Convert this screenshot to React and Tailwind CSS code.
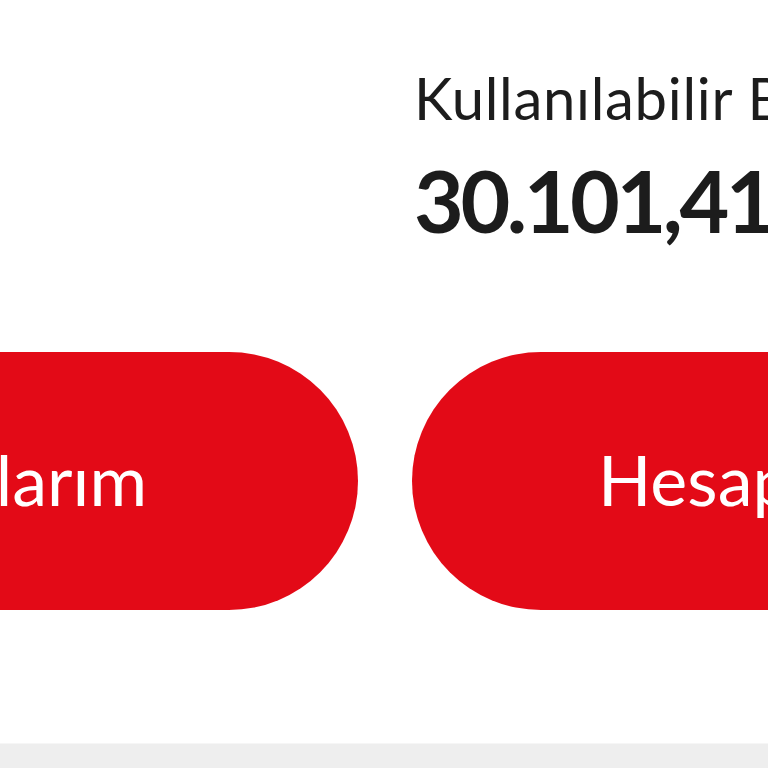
export default function App() {
  return (
    <div className="w-[768px] h-[768px] overflow-hidden bg-white flex flex-col font-['Lato',sans-serif]">
      <div className="flex-1 flex flex-col">
        <div className="ml-[414px] mt-[69px] whitespace-nowrap">
          <p className="text-[58px] leading-none tracking-[0.7px] text-[#1c1c1c] font-normal">Kullanılabilir Bakiye</p>
          <p className="mt-[30px] text-[86px] leading-none tracking-[-3.5px] text-[#1c1c1c] font-bold">30.101,41 TL</p>
        </div>

        <div className="mt-[109px] flex gap-[54px] ml-[-162px] whitespace-nowrap">
          <button className="shrink-0 w-[520px] h-[258px] rounded-full bg-[#e30a17] text-white text-[70px] flex items-center justify-end pr-[211px] pb-[4px]">
            Hesaplarım
          </button>
          <button className="shrink-0 w-[520px] h-[258px] rounded-full bg-[#e30a17] text-white text-[70px] flex items-center justify-start pl-[186px] pb-[4px]">
            Hesap Hareketleri
          </button>
        </div>
      </div>
      <div className="h-[25px] bg-[#eeeeee] border-t border-[#f6f6f6]" />
    </div>
  )
}
